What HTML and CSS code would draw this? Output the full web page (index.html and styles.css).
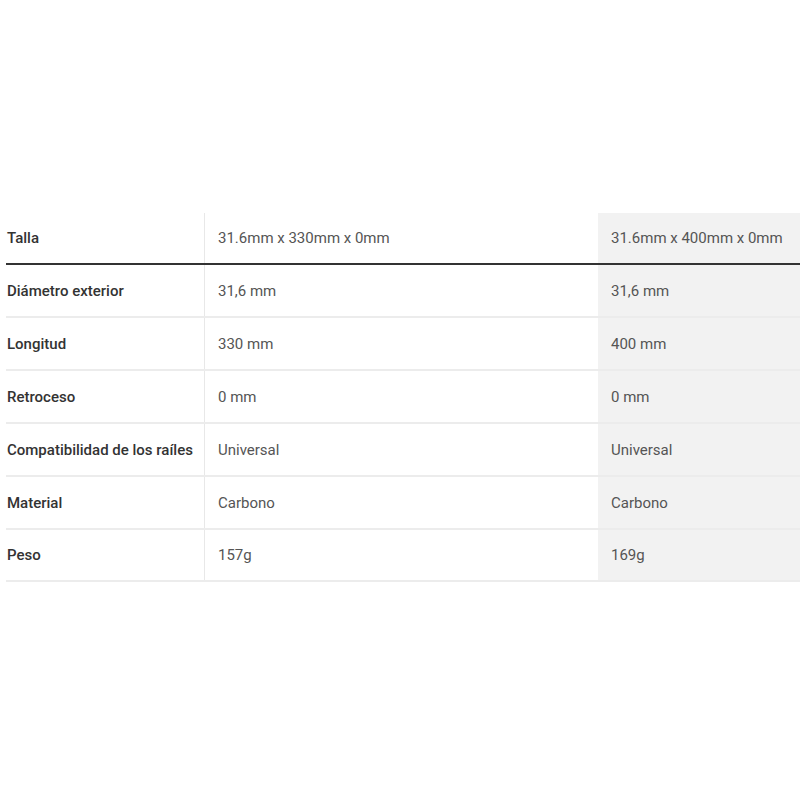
FILE: index.html
```html
<!DOCTYPE html>
<html lang="es">
<head>
<meta charset="utf-8">
<title>Tallas</title>
<link rel="stylesheet" href="styles.css">
</head>
<body>
<table class="spec">
  <thead>
    <tr>
      <th class="label">Talla</th>
      <td class="val">31.6mm x 330mm x 0mm</td>
      <td class="val alt">31.6mm x 400mm x 0mm</td>
    </tr>
  </thead>
  <tbody>
    <tr><th class="label">Diámetro exterior</th><td class="val">31,6 mm</td><td class="val alt">31,6 mm</td></tr>
    <tr><th class="label">Longitud</th><td class="val">330 mm</td><td class="val alt">400 mm</td></tr>
    <tr><th class="label">Retroceso</th><td class="val">0 mm</td><td class="val alt">0 mm</td></tr>
    <tr><th class="label">Compatibilidad de los raíles</th><td class="val">Universal</td><td class="val alt">Universal</td></tr>
    <tr><th class="label">Material</th><td class="val">Carbono</td><td class="val alt">Carbono</td></tr>
    <tr class="last"><th class="label">Peso</th><td class="val">157g</td><td class="val alt">169g</td></tr>
  </tbody>
</table>
</body>
</html>
```
FILE: styles.css
```css
html, body {
  margin: 0;
  padding: 0;
  background: #fff;
}
body {
  padding-top: 213px;
  font-family: Roboto, "Liberation Sans", Arial, sans-serif;
}
.spec {
  margin-left: 6px;
  width: 794px;
  border-collapse: collapse;
  table-layout: fixed;
  font-size: 15px;
}
.spec th, .spec td {
  text-align: left;
  vertical-align: middle;
  padding: 0;
}
.spec .label {
  width: 197px;
  padding-left: 1px;
  font-weight: 500;
  color: #333;
  border-right: 1px solid #e8e8e8;
  white-space: nowrap;
}
.spec .val {
  padding-left: 13px;
  color: #555;
  font-weight: 400;
}
.spec td.val:nth-child(2) {
  width: 380px;
}
.spec .alt {
  background: #f2f2f2;
}
.spec thead tr {
  height: 51px;
  border-bottom: 2px solid #333;
}
.spec tbody tr {
  height: 53px;
  border-bottom: 2px solid #ececec;
}
.spec tbody tr.last {
  height: 52px;
}
```
